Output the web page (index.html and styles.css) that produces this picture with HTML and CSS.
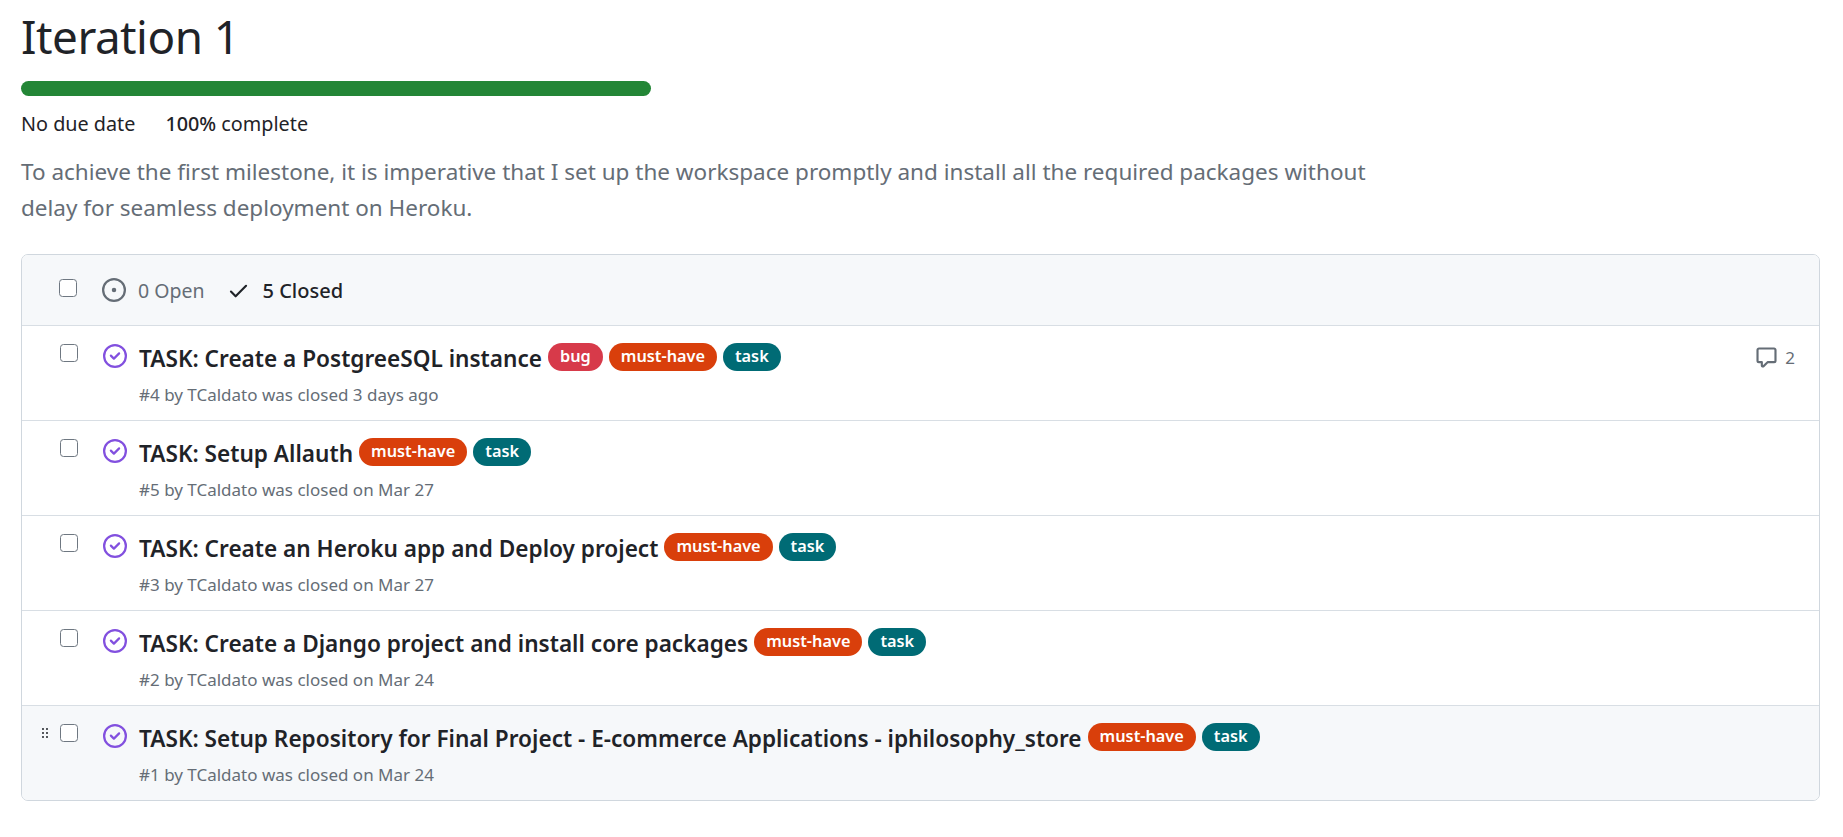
FILE: index.html
```html
<!DOCTYPE html>
<html lang="en">
<head>
<meta charset="utf-8">
<title>Iteration 1</title>
<link rel="stylesheet" href="styles.css">
</head>
<body>
<main class="page">
  <h1 class="title">Iteration 1</h1>
  <div class="progress"></div>
  <div class="stats"><span>No due date</span><span><strong>100%</strong> complete</span></div>
  <p class="desc">To achieve the first milestone, it is imperative that I set up the workspace promptly and install all the required packages without delay for seamless deployment on Heroku.</p>
  <section class="box">
    <div class="box-head">
      <span class="check head-check"></span>
      <span class="tab tab-open">
        <svg class="ic-open" viewBox="0 0 16 16"><path d="M8 9.5a1.5 1.5 0 1 0 0-3 1.5 1.5 0 0 0 0 3Z"/><path d="M8 0a8 8 0 1 1 0 16A8 8 0 0 1 8 0ZM1.5 8a6.5 6.5 0 1 0 13 0 6.5 6.5 0 0 0-13 0Z"/></svg>
        0 Open
      </span>
      <span class="tab tab-closed">
        <svg class="ic-check" viewBox="0 0 16 16"><path d="M13.78 4.22a.75.75 0 0 1 0 1.06l-7.25 7.25a.75.75 0 0 1-1.06 0L2.22 9.28a.751.751 0 0 1 .018-1.042.751.751 0 0 1 1.042-.018L6 10.94l6.72-6.72a.75.75 0 0 1 1.06 0Z"/></svg>
        5 Closed
      </span>
    </div>

    <article class="row">
      <span class="grab"></span><span class="check"></span>
      <svg class="ic-closed" viewBox="0 0 16 16"><path d="M11.28 6.78a.75.75 0 0 0-1.06-1.06L7.25 8.69 5.78 7.22a.75.75 0 0 0-1.06 1.06l2 2a.75.75 0 0 0 1.06 0l3.5-3.5Z"/><path d="M16 8A8 8 0 1 1 0 8a8 8 0 0 1 16 0Zm-1.5 0a6.5 6.5 0 1 0-13 0 6.5 6.5 0 0 0 13 0Z"/></svg>
      <div class="body">
        <div class="line"><a class="name">TASK: Create a PostgreeSQL instance</a><span class="label bug">bug</span><span class="label must">must-have</span><span class="label task">task</span></div>
        <div class="meta">#4 by TCaldato was closed 3 days ago</div>
      </div>
      <span class="comments">
        <svg class="ic-comment" viewBox="0 0 16 16"><path d="M1 2.75C1 1.784 1.784 1 2.75 1h10.5c.966 0 1.75.784 1.75 1.75v7.5A1.75 1.75 0 0 1 13.25 12H9.06l-2.573 2.573A1.458 1.458 0 0 1 4 13.543V12H2.75A1.75 1.75 0 0 1 1 10.25Zm1.75-.25a.25.25 0 0 0-.25.25v7.5c0 .138.112.25.25.25h2a.75.75 0 0 1 .75.75v2.19l2.72-2.72a.749.749 0 0 1 .53-.22h4.5a.25.25 0 0 0 .25-.25v-7.5a.25.25 0 0 0-.25-.25Z"/></svg>
        2
      </span>
    </article>

    <article class="row">
      <span class="grab"></span><span class="check"></span>
      <svg class="ic-closed" viewBox="0 0 16 16"><path d="M11.28 6.78a.75.75 0 0 0-1.06-1.06L7.25 8.69 5.78 7.22a.75.75 0 0 0-1.06 1.06l2 2a.75.75 0 0 0 1.06 0l3.5-3.5Z"/><path d="M16 8A8 8 0 1 1 0 8a8 8 0 0 1 16 0Zm-1.5 0a6.5 6.5 0 1 0-13 0 6.5 6.5 0 0 0 13 0Z"/></svg>
      <div class="body">
        <div class="line"><a class="name">TASK: Setup Allauth</a><span class="label must">must-have</span><span class="label task">task</span></div>
        <div class="meta">#5 by TCaldato was closed on Mar 27</div>
      </div>
    </article>

    <article class="row">
      <span class="grab"></span><span class="check"></span>
      <svg class="ic-closed" viewBox="0 0 16 16"><path d="M11.28 6.78a.75.75 0 0 0-1.06-1.06L7.25 8.69 5.78 7.22a.75.75 0 0 0-1.06 1.06l2 2a.75.75 0 0 0 1.06 0l3.5-3.5Z"/><path d="M16 8A8 8 0 1 1 0 8a8 8 0 0 1 16 0Zm-1.5 0a6.5 6.5 0 1 0-13 0 6.5 6.5 0 0 0 13 0Z"/></svg>
      <div class="body">
        <div class="line"><a class="name">TASK: Create an Heroku app and Deploy project</a><span class="label must">must-have</span><span class="label task">task</span></div>
        <div class="meta">#3 by TCaldato was closed on Mar 27</div>
      </div>
    </article>

    <article class="row">
      <span class="grab"></span><span class="check"></span>
      <svg class="ic-closed" viewBox="0 0 16 16"><path d="M11.28 6.78a.75.75 0 0 0-1.06-1.06L7.25 8.69 5.78 7.22a.75.75 0 0 0-1.06 1.06l2 2a.75.75 0 0 0 1.06 0l3.5-3.5Z"/><path d="M16 8A8 8 0 1 1 0 8a8 8 0 0 1 16 0Zm-1.5 0a6.5 6.5 0 1 0-13 0 6.5 6.5 0 0 0 13 0Z"/></svg>
      <div class="body">
        <div class="line"><a class="name">TASK: Create a Django project and install core packages</a><span class="label must">must-have</span><span class="label task">task</span></div>
        <div class="meta">#2 by TCaldato was closed on Mar 24</div>
      </div>
    </article>

    <article class="row row-hover">
      <span class="grab"><svg class="ic-grab" viewBox="0 0 16 16"><path d="M10 13a1 1 0 1 1 0-2 1 1 0 0 1 0 2Zm-4 0a1 1 0 1 1 0-2 1 1 0 0 1 0 2Zm1-5a1 1 0 1 1-2 0 1 1 0 0 1 2 0Zm3 1a1 1 0 1 1 0-2 1 1 0 0 1 0 2Zm1-5a1 1 0 1 1-2 0 1 1 0 0 1 2 0ZM6 5a1 1 0 1 1 0-2 1 1 0 0 1 0 2Z"/></svg></span><span class="check"></span>
      <svg class="ic-closed" viewBox="0 0 16 16"><path d="M11.28 6.78a.75.75 0 0 0-1.06-1.06L7.25 8.69 5.78 7.22a.75.75 0 0 0-1.06 1.06l2 2a.75.75 0 0 0 1.06 0l3.5-3.5Z"/><path d="M16 8A8 8 0 1 1 0 8a8 8 0 0 1 16 0Zm-1.5 0a6.5 6.5 0 1 0-13 0 6.5 6.5 0 0 0 13 0Z"/></svg>
      <div class="body">
        <div class="line"><a class="name">TASK: Setup Repository for Final Project - E-commerce Applications - iphilosophy_store</a><span class="label must">must-have</span><span class="label task">task</span></div>
        <div class="meta">#1 by TCaldato was closed on Mar 24</div>
      </div>
    </article>
  </section>
</main>
</body>
</html>
```

FILE: styles.css
```css
* { box-sizing: border-box; }
html, body { margin: 0; background: #fff; }
body {
  font-family: "Noto Sans", "Open Sans", sans-serif;
  color: #1f2328;
  overflow: hidden;
}
.page { padding: 0 23px 0 21px; height: 837px; }

.title {
  margin: 0;
  font-size: 45.8px;
  font-weight: 400;
  line-height: 72px;
  letter-spacing: -0.5px;
}
.progress {
  width: 630px;
  height: 15px;
  margin-top: 9px;
  background: #238636;
  border-radius: 8px;
}
.stats {
  display: flex;
  gap: 30px;
  margin-top: 16px;
  font-size: 19.8px;
  line-height: 24px;
}
.stats strong { font-weight: 500; }
.desc {
  width: 1370px;
  margin: 18px 0 0;
  font-size: 22.5px;
  line-height: 36px;
  color: #656d76;
}

.box {
  margin-top: 28px;
  border: 1px solid #d0d7de;
  border-radius: 7px;
  overflow: hidden;
}
.box-head {
  display: flex;
  align-items: center;
  height: 70px;
  padding-left: 37px;
  background: #f6f8fa;
  font-size: 19.5px;
}
.check {
  flex: none;
  display: block;
  width: 18px;
  height: 18px;
  border: 1.5px solid #6e7781;
  border-radius: 3.5px;
  background: #fff;
}
.head-check { margin-top: -5px; margin-right: 25px; }
.tab { display: flex; align-items: center; }
.tab svg { fill: currentColor; flex: none; }
.tab-open { color: #656d76; margin-right: 22px; }
.ic-open { width: 24px; height: 24px; margin-right: 12px; fill: #656d76; }
.tab-closed { font-size: 20px; font-weight: 500; color: #1f2328; }
.ic-check { width: 23px; height: 23px; margin-right: 13px; }

.row {
  display: flex;
  align-items: flex-start;
  height: 95px;
  border-top: 1px solid #d8dee4;
  padding-top: 18px;
}
.row-hover { background: #f6f8fa; }
.grab {
  flex: none;
  width: 38px;
  height: 18px;
  padding-left: 15px;
}
.ic-grab { display: block; width: 16px; height: 18px; fill: #1f2328; }
.row .check { margin-right: 25px; }
.ic-closed { flex: none; width: 24px; height: 24px; fill: #8250df; margin-right: 12px; }
.body { flex: 1; min-width: 0; }
.line { display: flex; align-items: center; gap: 6px; height: 30px; }
.name { font-size: 22.6px; font-weight: 600; line-height: 30px; white-space: nowrap; color: #1f2328; }
.label {
  display: block;
  height: 28px;
  margin-top: -5px;
  padding: 0 12px;
  border-radius: 14px;
  font-size: 16.3px;
  font-weight: 600;
  line-height: 27px;
  color: #fff;
}
.bug { background: #d73a4a; }
.must { background: #d93f0b; }
.task { background: #006b75; }
.meta { margin-top: 11px; font-size: 17px; line-height: 20px; color: #656d76; }
.comments {
  display: flex;
  align-items: center;
  gap: 7px;
  margin: 2px 24px 0 0;
  font-size: 17px;
  color: #656d76;
}
.ic-comment { width: 23px; height: 23px; fill: #656d76; }
```
